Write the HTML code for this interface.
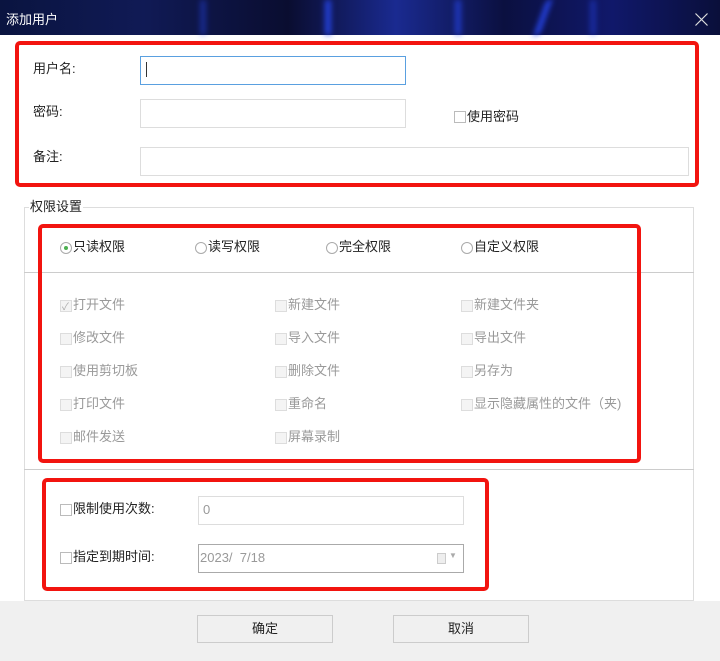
<!DOCTYPE html>
<html><head><meta charset="utf-8"><style>
*{margin:0;padding:0;box-sizing:border-box}
body{width:720px;height:661px;position:relative;background:#fff;font-family:"Liberation Sans","Noto Sans CJK SC",sans-serif;font-size:13px;color:#222;overflow:hidden}
.a{position:absolute}
.title{left:0;top:0;width:720px;height:35px;background:linear-gradient(90deg,#0a1440 0%,#101a55 20%,#0a0d30 40%,#1a2a90 55%,#0b1040 70%,#10186a 85%,#0a0f3a 100%)}
.streak{position:absolute;width:6px;height:35px;top:0;background:#2a4cff;filter:blur(3px);opacity:.8}
.red{border:4px solid #f2140f;border-radius:5px}
.inp{border:1px solid #ddd;background:#fff}
.cb{width:12px;height:12px;border:1px solid #bbb;background:#fff}
.dis .cb{border-color:#ddd;background:#f4f4f4}
.lbl{font-size:13px;line-height:14px}
.g{color:#999}
.rd{width:12px;height:12px;border:1px solid #aaa;border-radius:50%;background:#fff}
.btn{border:1px solid #ccc;background:#f0f0f0;text-align:center;line-height:26px;font-size:13px}
</style></head><body>
<div class="a title">
<div class="streak" style="left:200px;opacity:.4"></div>
<div class="streak" style="left:325px"></div>
<div class="streak" style="left:455px;opacity:.6"></div>
<div class="streak" style="left:540px;transform:skewX(-20deg)"></div>
<div class="streak" style="left:590px;opacity:.4"></div>
<div class="a" style="left:6px;top:9px;color:#fff;font-size:13px">添加用户</div>
<svg class="a" style="left:695px;top:13px" width="13" height="13"><path d="M0.5 0.5L12.5 12.5M12.5 0.5L0.5 12.5" stroke="#ddd" stroke-width="1.2"/></svg>
</div>

<div class="a red" style="left:15px;top:41px;width:684px;height:146px"></div>
<div class="a lbl" style="left:33px;top:62px">用户名:</div>
<div class="a inp" style="left:140px;top:56px;width:266px;height:29px;border-color:#5aa0e0"></div>
<div class="a" style="left:146px;top:62px;width:1px;height:15px;background:#333"></div>
<div class="a lbl" style="left:33px;top:105px">密码:</div>
<div class="a inp" style="left:140px;top:99px;width:266px;height:29px"></div>
<div class="a cb" style="left:454px;top:111px"></div>
<div class="a lbl" style="left:467px;top:110px">使用密码</div>
<div class="a lbl" style="left:33px;top:150px">备注:</div>
<div class="a inp" style="left:140px;top:147px;width:549px;height:29px"></div>

<div class="a" style="left:24px;top:207px;width:670px;height:394px;border:1px solid #ddd"></div>
<div class="a lbl" style="left:29px;top:200px;background:#fff;padding:0 1px">权限设置</div>
<div class="a" style="left:24px;top:272px;width:670px;height:1px;background:#ccc"></div>
<div class="a" style="left:24px;top:469px;width:670px;height:1px;background:#ccc"></div>

<div class="a red" style="left:38px;top:224px;width:603px;height:239px"></div>
<div class="a rd" style="left:60px;top:242px"></div><div class="a" style="left:64px;top:246px;width:4px;height:4px;border-radius:50%;background:#4caf50"></div>
<div class="a lbl" style="left:73px;top:240px">只读权限</div>
<div class="a rd" style="left:195px;top:242px"></div><div class="a lbl" style="left:208px;top:240px">读写权限</div>
<div class="a rd" style="left:326px;top:242px"></div><div class="a lbl" style="left:339px;top:240px">完全权限</div>
<div class="a rd" style="left:461px;top:242px"></div><div class="a lbl" style="left:474px;top:240px">自定义权限</div>

<div class="dis">
<div class="a cb" style="left:60px;top:300px"></div><div class="a" style="left:62px;top:298px;font-size:10px;color:#aaa">✓</div><div class="a lbl g" style="left:73px;top:298px">打开文件</div>
<div class="a cb" style="left:275px;top:300px"></div><div class="a lbl g" style="left:288px;top:298px">新建文件</div>
<div class="a cb" style="left:461px;top:300px"></div><div class="a lbl g" style="left:474px;top:298px">新建文件夹</div>
<div class="a cb" style="left:60px;top:333px"></div><div class="a lbl g" style="left:73px;top:331px">修改文件</div>
<div class="a cb" style="left:275px;top:333px"></div><div class="a lbl g" style="left:288px;top:331px">导入文件</div>
<div class="a cb" style="left:461px;top:333px"></div><div class="a lbl g" style="left:474px;top:331px">导出文件</div>
<div class="a cb" style="left:60px;top:366px"></div><div class="a lbl g" style="left:73px;top:364px">使用剪切板</div>
<div class="a cb" style="left:275px;top:366px"></div><div class="a lbl g" style="left:288px;top:364px">删除文件</div>
<div class="a cb" style="left:461px;top:366px"></div><div class="a lbl g" style="left:474px;top:364px">另存为</div>
<div class="a cb" style="left:60px;top:399px"></div><div class="a lbl g" style="left:73px;top:397px">打印文件</div>
<div class="a cb" style="left:275px;top:399px"></div><div class="a lbl g" style="left:288px;top:397px">重命名</div>
<div class="a cb" style="left:461px;top:399px"></div><div class="a lbl g" style="left:474px;top:397px">显示隐藏属性的文件（夹)</div>
<div class="a cb" style="left:60px;top:432px"></div><div class="a lbl g" style="left:73px;top:430px">邮件发送</div>
<div class="a cb" style="left:275px;top:432px"></div><div class="a lbl g" style="left:288px;top:430px">屏幕录制</div>
</div>

<div class="a red" style="left:42px;top:478px;width:447px;height:113px"></div>
<div class="a cb" style="left:60px;top:504px"></div><div class="a lbl" style="left:73px;top:502px">限制使用次数:</div>
<div class="a inp" style="left:198px;top:496px;width:266px;height:29px"></div>
<div class="a lbl g" style="left:203px;top:503px">0</div>
<div class="a cb" style="left:60px;top:552px"></div><div class="a lbl" style="left:73px;top:550px">指定到期时间:</div>
<div class="a inp" style="left:198px;top:544px;width:266px;height:29px;border-color:#aaa"></div>
<div class="a lbl g" style="left:200px;top:551px">2023/&nbsp; 7/18</div>
<div class="a" style="left:437px;top:553px;width:9px;height:11px;border:1px solid #ccc;background:#eee"></div>
<div class="a" style="left:449px;top:551px;font-size:8px;color:#aaa">▼</div>

<div class="a" style="left:0;top:601px;width:720px;height:60px;background:#f0f0f0"></div>
<div class="a btn" style="left:197px;top:615px;width:136px;height:28px">确定</div>
<div class="a btn" style="left:393px;top:615px;width:136px;height:28px">取消</div>
</body></html>
